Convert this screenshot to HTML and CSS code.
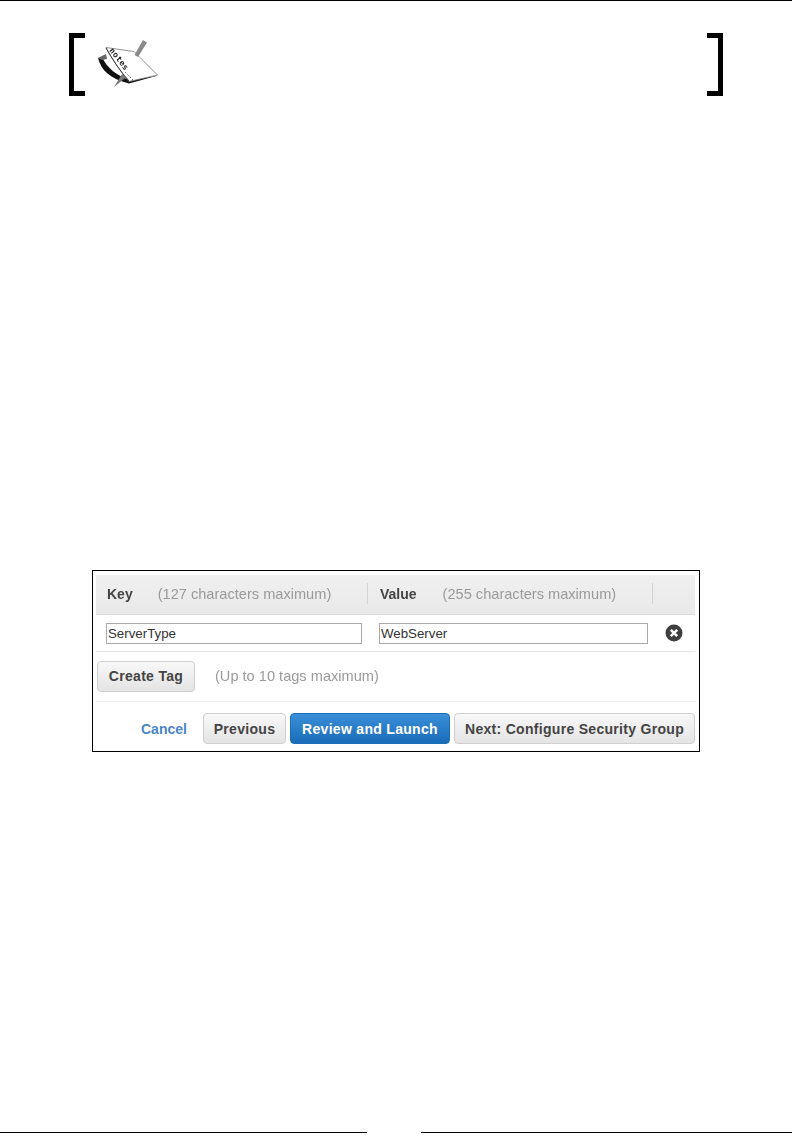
FILE: index.html
```html
<!DOCTYPE html>
<html lang="en">
<head>
    <meta charset="UTF-8">
    <title>Add Tags</title>
    <link rel="stylesheet" href="styles.css">
</head>
<body>
    <div class="page">
        <div class="top-rule"></div>

        <div class="note">
            <div class="bracket bracket-left"></div>
            <svg class="note-icon" width="65" height="55" viewBox="0 0 65 55">
                <path d="M2 23 C5 35 14 44 33 48.5 L62 40.5 L34 45 C21 41 11 33 6 22 Z" fill="#111"/>
                <path d="M2 23 L10 19 L11 24 L6 25 Z" fill="#666"/>
                <path d="M10 12.5 L38 16.5 L61.5 40 L33 46.5 C24 36 16 24 10 12.5 Z" fill="#fff" stroke="#777" stroke-width="0.8"/>
                <path d="M10 13 C16 24 24 36 33 46" fill="none" stroke="#333" stroke-width="1"/>
                <path d="M47 5 L51 7.5 L42 22 L38.5 20 Z" fill="#8a8a8a"/>
                <path d="M26 39 L30.5 42 L18 52 Z" fill="#777"/>
                <text class="note-word" transform="translate(13 15.5) rotate(52)">notes</text>
                <path d="M29 37 L37 45" stroke="#444" stroke-width="1" stroke-dasharray="1 1.5"/>
            </svg>
            <div class="bracket bracket-right"></div>
        </div>

        <div class="figure">
            <div class="tag-head">
                <div class="head-cell key-cell"><b>Key</b><span class="muted">(127 characters maximum)</span></div>
                <div class="head-cell value-cell"><b class="value-label">Value</b><span class="muted">(255 characters maximum)</span></div>
            </div>

            <div class="tag-row">
                <div class="field key-field">ServerType</div>
                <div class="field value-field">WebServer</div>
                <svg class="remove-icon" width="18" height="18" viewBox="0 0 18 18">
                    <circle cx="9" cy="9" r="8.5" fill="#3f3f3f"/>
                    <path d="M5.8 5.8 L12.2 12.2 M12.2 5.8 L5.8 12.2" stroke="#fff" stroke-width="2.6"/>
                </svg>
            </div>

            <div class="add-row">
                <button class="btn create-btn">Create Tag</button>
                <span class="muted">(Up to 10 tags maximum)</span>
            </div>

            <div class="actions">
                <a class="cancel">Cancel</a>
                <button class="btn prev-btn">Previous</button>
                <button class="btn btn-primary review-btn">Review and Launch</button>
                <button class="btn next-btn">Next: Configure Security Group</button>
            </div>
        </div>

        <div class="footer-rule">
            <span></span>
            <span></span>
        </div>
    </div>
</body>
</html>
```

FILE: styles.css
```css
html, body {
    margin: 0;
    background-color: #fff;
}
.page {
    display: flex;
    flex-direction: column;
    width: 792px;
    height: 1142px;
    overflow: hidden;
    font-family: "Liberation Sans", Arial, sans-serif;
}
.top-rule {
    height: 1px;
    background-color: #000;
}
.note {
    display: flex;
    align-items: flex-start;
    height: 63px;
    margin: 32px 69px 0 69px;
}
.bracket {
    box-sizing: border-box;
    width: 16px;
    height: 63px;
    border: 5px solid #000;
}
.bracket-left {
    border-right: none;
}
.bracket-right {
    border-left: none;
    margin-left: auto;
}
.note-icon {
    margin: 2px 0 0 11px;
    filter: blur(0.3px);
}
.note-word {
    font-family: "DejaVu Sans Mono", monospace;
    font-size: 8px;
    font-weight: bold;
    letter-spacing: 0.4px;
    fill: #222;
}
.figure {
    box-sizing: border-box;
    width: 608px;
    height: 182px;
    margin: 474px 0 0 92px;
    padding: 4px 4px 0 3px;
    border: 1px solid #000;
}
.muted {
    color: #9a9a9a;
    font-size: 14.6px;
    filter: blur(0.4px);
}
.tag-head {
    display: flex;
    height: 40px;
    padding-bottom: 2px;
    background: linear-gradient(#f0f0f0, #e9e9e9);
    border-bottom: 1px solid #dcdcdc;
    box-sizing: border-box;
    align-items: center;
    color: #444;
    font-size: 14px;
}
.head-cell {
    display: flex;
    align-items: center;
    height: 21px;
    padding-left: 11px;
}
.head-cell b {
    margin-right: 25px;
    filter: blur(0.4px);
}
.head-cell .value-label {
    margin-right: 26px;
}
.key-cell {
    width: 260px;
    border-right: 1px solid #d4d4d4;
}
.value-cell {
    width: 272px;
    padding-left: 12px;
    border-right: 1px solid #d4d4d4;
}
.tag-row {
    display: flex;
    align-items: center;
    height: 37px;
    box-sizing: border-box;
    padding-left: 10px;
    border-bottom: 1px solid #e6e6e6;
}
.field {
    box-sizing: border-box;
    height: 21px;
    line-height: 19px;
    padding-left: 1px;
    border: 1px solid #a9a9a9;
    font-size: 13.3px;
    color: #333;
}
.key-field {
    width: 256px;
}
.value-field {
    width: 269px;
    margin-left: 17px;
}
.remove-icon {
    margin-left: 17px;
    filter: blur(0.3px);
}
.add-row {
    display: flex;
    align-items: center;
    height: 50px;
    box-sizing: border-box;
    padding: 0 0 1px 1px;
    border-bottom: 1px solid #ececec;
}
.add-row .muted {
    margin-left: 20px;
}
.btn {
    box-sizing: border-box;
    height: 31px;
    padding: 0;
    border: 1px solid #cfcfcf;
    border-radius: 4px;
    background: linear-gradient(#f8f8f8, #e4e4e4);
    color: #444;
    font-family: inherit;
    font-size: 14px;
    font-weight: bold;
    letter-spacing: 0.3px;
}
.btn-primary {
    border-color: #1a6fb8;
    background: linear-gradient(#3a8fd8, #1a6cb8);
    color: #fff;
}
.create-btn {
    width: 98px;
}
.actions {
    display: flex;
    align-items: center;
    gap: 4px;
    margin-top: 11px;
}
.cancel {
    width: 47px;
    margin: 0 11px 0 45px;
    color: #4a86c5;
    font-size: 14px;
    font-weight: bold;
}
.prev-btn {
    width: 83px;
}
.review-btn {
    width: 160px;
}
.next-btn {
    width: 241px;
}
.footer-rule {
    display: flex;
    justify-content: space-between;
    margin-top: auto;
    margin-bottom: 9px;
}
.footer-rule span {
    width: 367px;
    height: 1px;
    background-color: #000;
}
.footer-rule span:last-child {
    width: 371px;
}
```
